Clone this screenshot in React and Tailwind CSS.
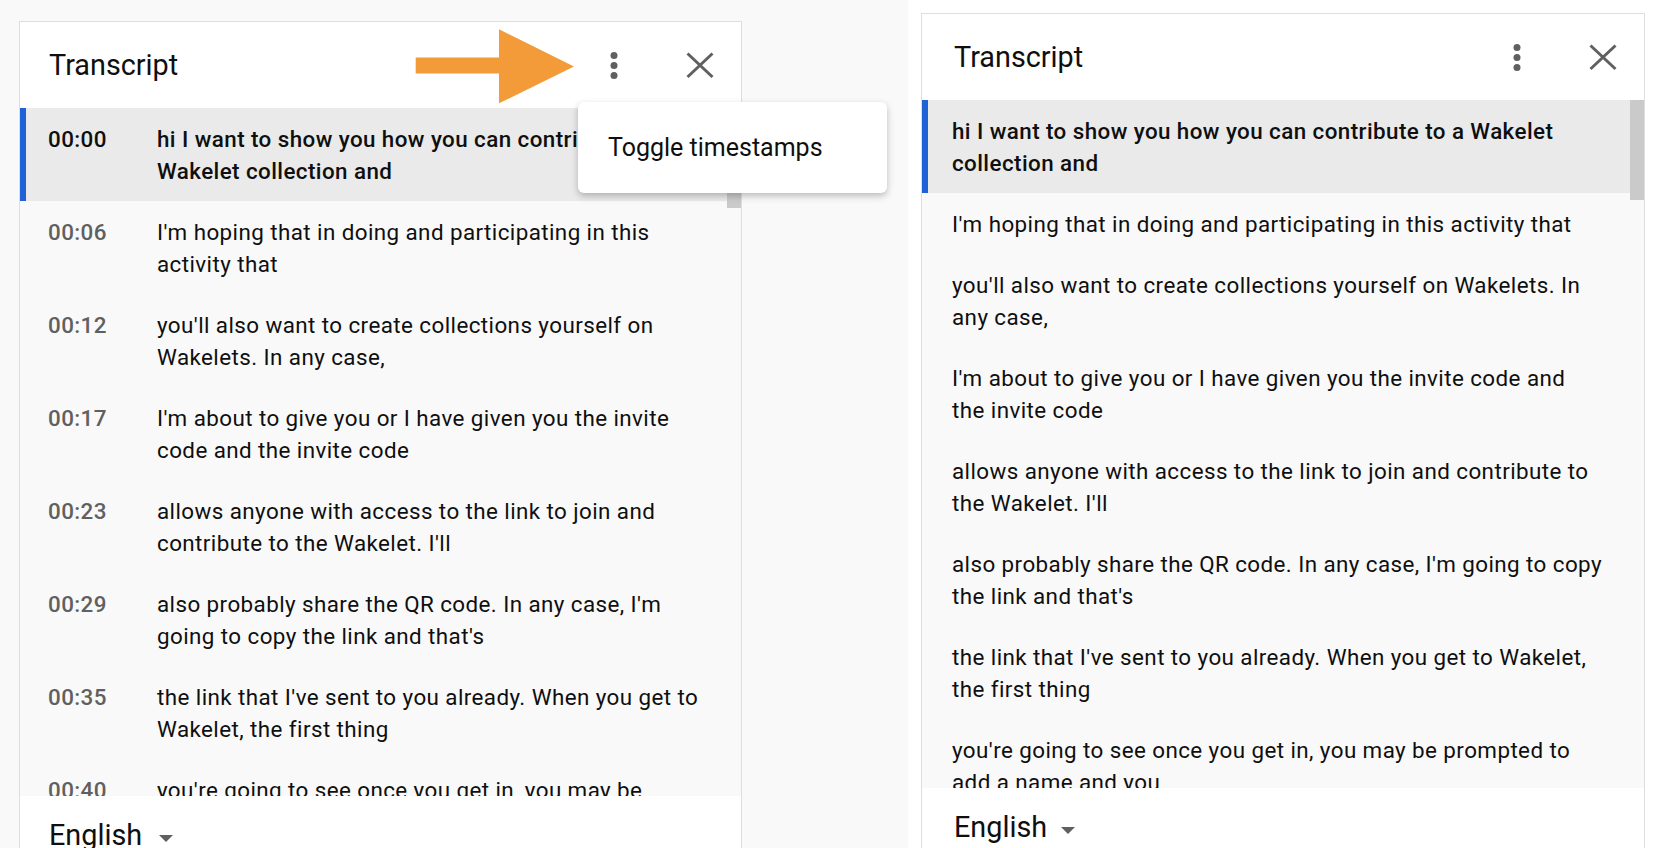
import React from "react";

const rows = [
  { t: "00:00", text: "hi I want to show you how you can contribute to a Wakelet collection and", active: true },
  { t: "00:06", text: "I'm hoping that in doing and participating in this activity that" },
  { t: "00:12", text: "you'll also want to create collections yourself on Wakelets. In any case," },
  { t: "00:17", text: "I'm about to give you or I have given you the invite code and the invite code" },
  { t: "00:23", text: "allows anyone with access to the link to join and contribute to the Wakelet. I'll" },
  { t: "00:29", text: "also probably share the QR code. In any case, I'm going to copy the link and that's" },
  { t: "00:35", text: "the link that I've sent to you already. When you get to Wakelet, the first thing" },
  { t: "00:40", text: "you're going to see once you get in, you may be prompted to add a name and you" },
];

function MoreIcon() {
  return (
    <svg width="40" height="40" viewBox="0 0 40 40" className="block">
      <circle cx="20" cy="10.5" r="3.5" fill="#606060" />
      <circle cx="20" cy="20.5" r="3.5" fill="#606060" />
      <circle cx="20" cy="30.5" r="3.5" fill="#606060" />
    </svg>
  );
}

function CloseIcon() {
  return (
    <svg width="40" height="40" viewBox="0 0 40 40" className="block">
      <path d="M7.5 8.5 L32.5 32 M32.5 8.5 L7.5 32" stroke="#606060" strokeWidth="3" fill="none" />
    </svg>
  );
}

function Caret() {
  return (
    <svg width="14" height="7" viewBox="0 0 14 7" className="block">
      <path d="M0 0 L14 0 L7 7 Z" fill="#606060" />
    </svg>
  );
}

function Panel({ timestamps, titlePad, rowPad }) {
  return (
    <div className={timestamps ? "w-[723px] border border-[#dedede] flex flex-col" : "w-[724px] border border-[#dedede] flex flex-col"}>
      <div className="h-[86px] bg-white flex items-center justify-between">
        <div className={`${titlePad} text-[28.8px] leading-[40px] text-[#0f0f0f]`}>Transcript</div>
        <div className="flex items-center gap-[46px] mr-[21px]">
          <MoreIcon />
          <CloseIcon />
        </div>
      </div>
      <div className="h-[688px] flex bg-[#f9f9f9] overflow-hidden">
        <div className="flex-1 flex flex-col">
          {rows.map((r) => (
            <div
              key={r.t}
              className={
                r.active
                  ? `flex py-[14.5px] pr-[26px] bg-[#eaeaea] border-l-[6px] border-[#1f62d6] ${rowPad.active}`
                  : `flex py-[14.5px] pr-[26px] ${rowPad.normal}`
              }
            >
              {timestamps && (
                <div
                  className={
                    r.active
                      ? "w-[109px] shrink-0 text-[22.4px] leading-[32px] tracking-[0.4px] font-medium text-[#0f0f0f]"
                      : "w-[109px] shrink-0 text-[22.4px] leading-[32px] tracking-[0.4px] font-medium text-[#606060]"
                  }
                >
                  {r.t}
                </div>
              )}
              <div
                className={
                  r.active
                    ? "flex-1 text-[22.4px] leading-[32px] tracking-[0.42px] font-medium text-[#0f0f0f]"
                    : "flex-1 text-[22.4px] leading-[32px] tracking-[0.42px] text-[#0f0f0f]"
                }
              >
                {r.text}
              </div>
            </div>
          ))}
        </div>
        <div className="w-[14px] shrink-0">
          <div className="h-[100px] bg-[#cacaca]" />
        </div>
      </div>
      <div className={`h-[120px] bg-white pt-[19px] ${titlePad} flex items-start`}>
        <div className="flex items-center">
          <span className="text-[28.8px] leading-[40px] text-[#0f0f0f]">English</span>
          <span className={timestamps ? "ml-[17px] mt-[6px]" : "ml-[14px] mt-[6px]"}>
            <Caret />
          </span>
        </div>
      </div>
    </div>
  );
}

export default function App() {
  return (
    <div className="flex w-[1655px] h-[848px] overflow-hidden font-['Roboto',sans-serif]">
      <div className="relative w-[908px] shrink-0 bg-[#f9f9f9] pl-[19px] pt-[21px]">
        <Panel
          timestamps
          titlePad="pl-[29px]"
          rowPad={{ active: "pl-[22px]", normal: "pl-[28px]" }}
        />
        <svg className="absolute left-0 top-0" width="600" height="120" viewBox="0 0 600 120">
          <polygon
            points="415.7,57.5 499,57.5 499,29.3 574,66.5 499,103.3 499,73.5 415.7,73.5"
            fill="#f29b38"
          />
        </svg>
        <div className="absolute left-[578px] top-[102px] w-[309px] h-[91px] bg-white rounded-[6px] shadow-[0_3px_7px_rgba(0,0,0,0.25)] flex items-center pl-[30px]">
          <span className="text-[25px] leading-[32px] text-[#0f0f0f]">Toggle timestamps</span>
        </div>
      </div>
      <div className="flex-1 bg-white pl-[13px] pt-[13px]">
        <Panel
          timestamps={false}
          titlePad="pl-[32px]"
          rowPad={{ active: "pl-[24px]", normal: "pl-[30px]" }}
        />
      </div>
    </div>
  );
}
